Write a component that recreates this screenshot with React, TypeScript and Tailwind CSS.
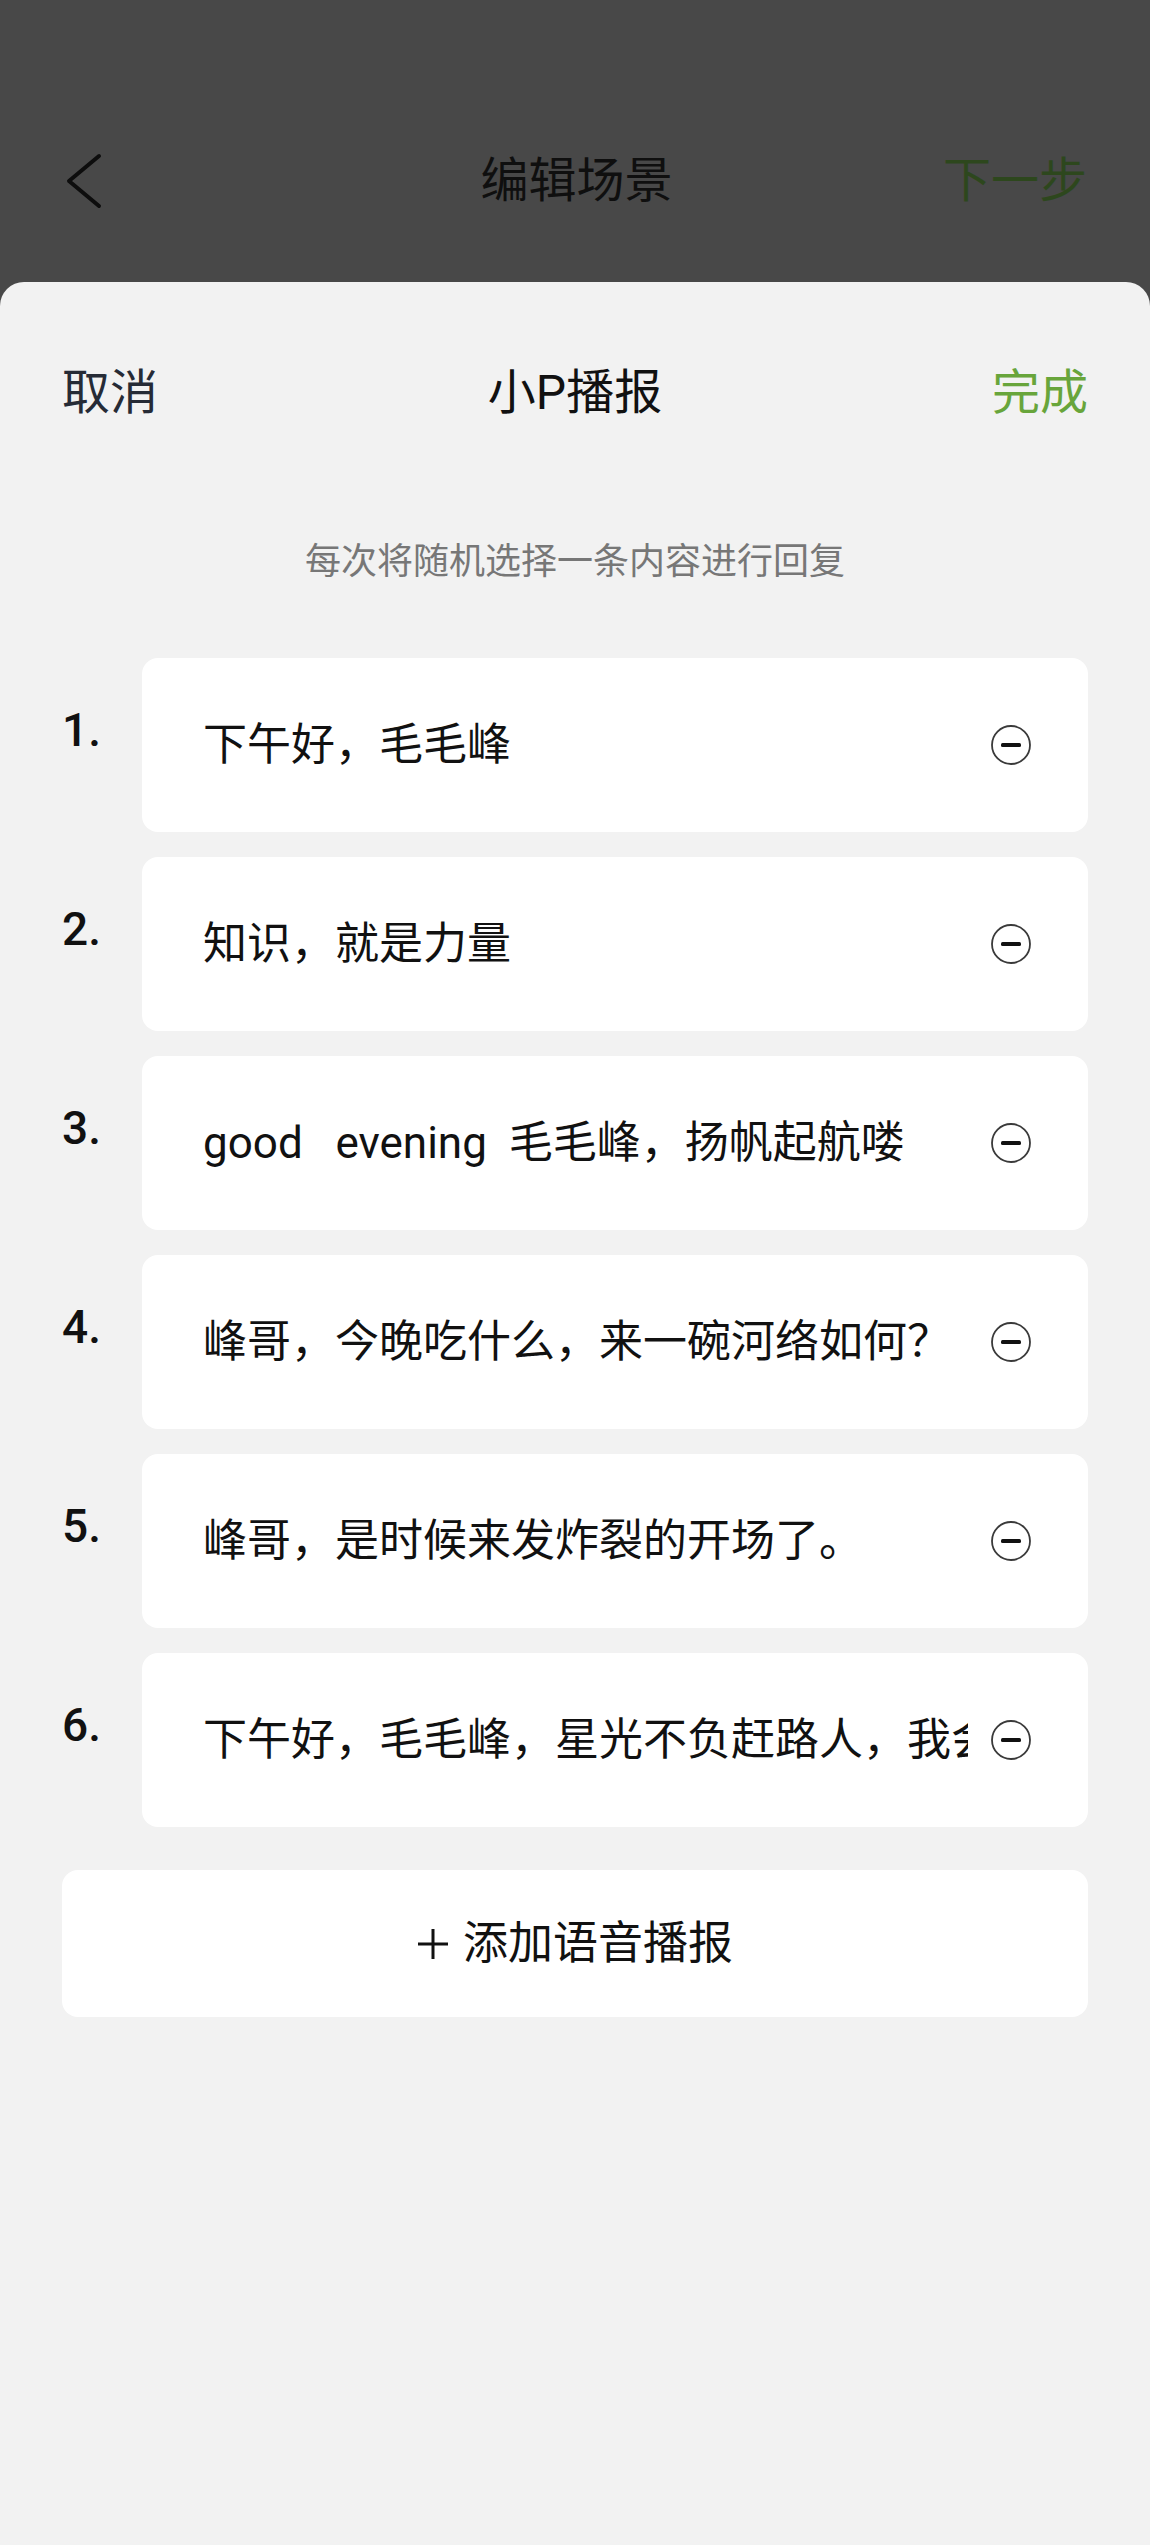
import React from 'react';

const items = [
    '下午好，毛毛峰',
    '知识，就是力量',
    'good   evening  毛毛峰，扬帆起航喽',
    '峰哥，今晚吃什么，来一碗河络如何？',
    '峰哥，是时候来发炸裂的开场了。',
    '下午好，毛毛峰，星光不负赶路人，我会',
];

const MinusCircle: React.FC = () => (
    <svg width="40" height="40" viewBox="0 0 40 40" className="shrink-0">
        <circle cx="20" cy="20" r="19" fill="none" stroke="#3a3a3a" strokeWidth="1.8" />
        <rect x="10" y="18" width="20" height="4" rx="1.5" fill="#111" />
    </svg>
);

const ItemRow: React.FC<{ index: number; text: string }> = ({ index, text }) => (
    <div className="flex">
        <div className="w-[80px] shrink-0 pt-[49px] font-['Roboto',sans-serif] text-[46px] font-medium leading-none text-[#111]">
            {index}.
        </div>
        <div className="flex h-[174px] min-w-0 flex-1 items-center rounded-[16px] bg-white pl-[61px] pr-[57px]">
            <div className="min-w-0 flex-1 overflow-hidden whitespace-pre text-[44px] leading-[60px] text-[#111]">
                {text}
            </div>
            <div className="ml-[23px] shrink-0">
                <MinusCircle />
            </div>
        </div>
    </div>
);

export default function App() {
    return (
        <div className="flex min-h-[2545px] w-full flex-col bg-[#484848] font-['Roboto','Noto_Sans_CJK_SC',sans-serif]">
            {/* dimmed page behind the sheet */}
            <div className="h-[282px] shrink-0 pt-[133px]">
                <div className="flex h-[96px] items-center justify-between pl-[66px] pr-[63px]">
                    <div className="w-[160px]">
                        <svg width="36" height="56" viewBox="0 0 36 56">
                            <polyline
                                points="33,3 3,28 33,53"
                                fill="none"
                                stroke="#0d0d0d"
                                strokeWidth="4"
                                strokeLinecap="round"
                                strokeLinejoin="round"
                            />
                        </svg>
                    </div>
                    <div className="text-[48px] leading-none text-[#0f0f0f]">编辑场景</div>
                    <div className="w-[160px] text-right text-[48px] leading-none text-[#2d471d]">下一步</div>
                </div>
            </div>

            {/* bottom sheet */}
            <div className="flex flex-1 flex-col rounded-t-[24px] bg-[#f2f2f2] px-[62px]">
                <div className="mt-[63px] flex h-[96px] items-center justify-between">
                    <div className="w-[160px] text-[48px] leading-none text-[#262b36]">取消</div>
                    <div className="text-[48px] leading-none text-[#111]">小P播报</div>
                    <div className="w-[160px] text-right text-[48px] leading-none text-[#68a53b]">完成</div>
                </div>

                <p className="mt-[97px] text-center text-[36px] leading-[48px] text-[#777]">
                    每次将随机选择一条内容进行回复
                </p>

                <div className="mt-[72px] flex flex-col gap-[25px]">
                    {items.map((text, i) => (
                        <ItemRow key={i} index={i + 1} text={text} />
                    ))}
                </div>

                <button className="mt-[43px] flex h-[147px] items-center justify-center gap-[14px] rounded-[16px] bg-white text-[45px] leading-none text-[#111]">
                    <svg width="32" height="32" viewBox="0 0 32 32">
                        <path d="M16 1v30M1 16h30" stroke="#111" strokeWidth="3" />
                    </svg>
                    添加语音播报
                </button>
            </div>
        </div>
    );
}
